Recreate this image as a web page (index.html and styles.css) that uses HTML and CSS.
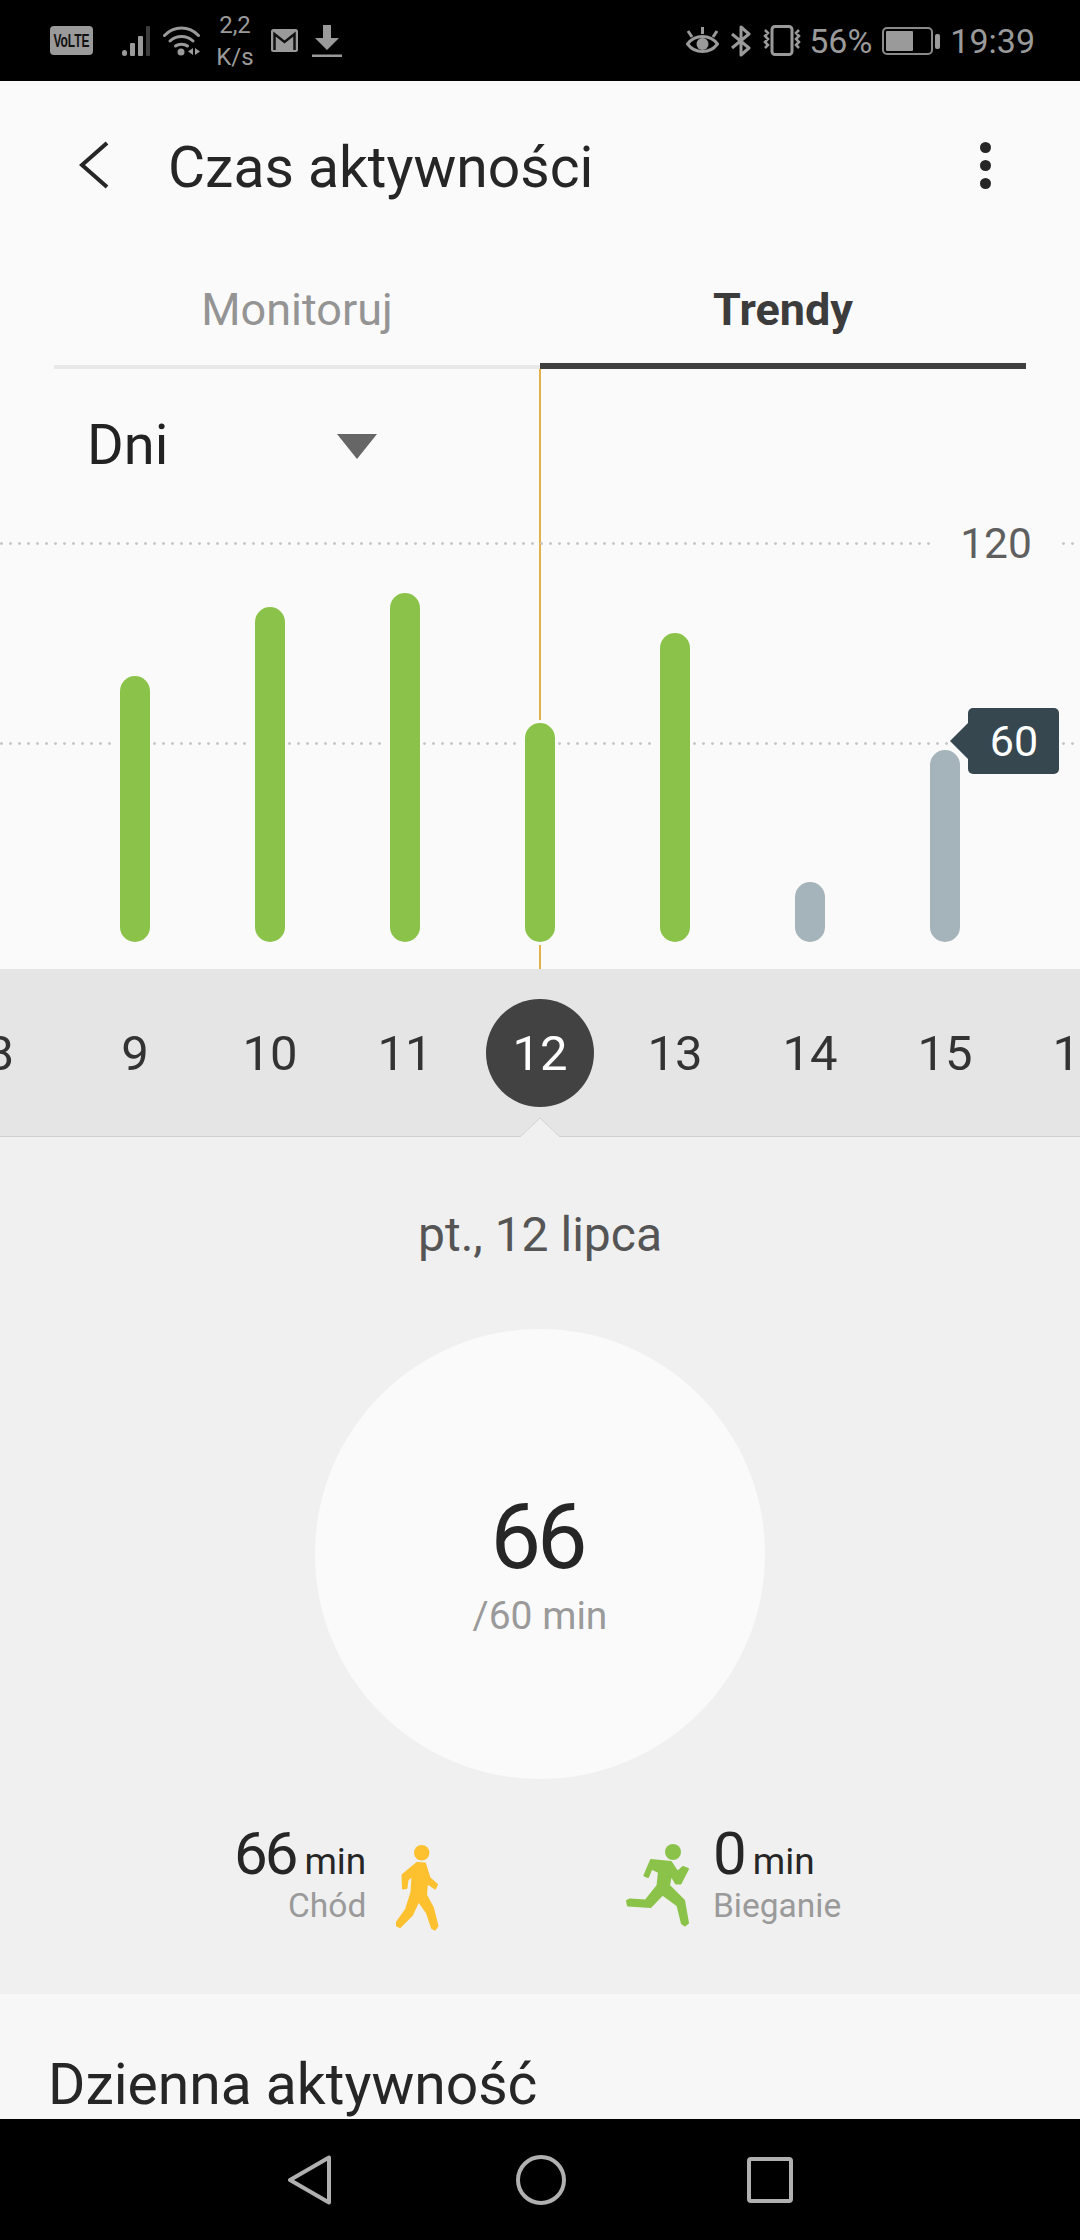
FILE: index.html
```html
<!DOCTYPE html>
<html lang="pl">
<head>
<meta charset="utf-8">
<title>Czas aktywności</title>
<link rel="stylesheet" href="styles.css">
</head>
<body>
<div class="phone">
  <div class="status">
    <div class="status-left">
      <svg class="i-volte" width="43" height="29" viewBox="0 0 43 29"><rect width="43" height="29" rx="4" fill="#9a9a9a"/><text x="21.500" y="13.200" text-anchor="middle" class="volte-t" transform="scale(1 1.600)">VoLTE</text></svg>
      <svg class="i-signal" width="32" height="30" viewBox="0 0 32 30"><rect x="0" y="24" width="5" height="6" rx="2.500" fill="#9a9a9a"/><rect x="8" y="17" width="5" height="13" rx="1" fill="#9a9a9a"/><rect x="16" y="10" width="5" height="20" rx="1" fill="#9a9a9a"/><rect x="24" y="0" width="4" height="30" rx="1" fill="#3c3c3c"/></svg>
      <svg class="i-wifi" width="37" height="30" viewBox="0 0 37 30"><g fill="none" stroke="#9a9a9a" stroke-width="3" stroke-linecap="round"><path d="M1.500 9.500C11 -0.500 26 -0.500 35.500 9.500"/><path d="M7 15C13.500 9 23.500 9 30 15"/><path d="M12.500 20C15.500 17.500 21.500 17.500 24.500 20"/></g><circle cx="18" cy="26" r="3.500" fill="#9a9a9a"/><path d="M30 22v7l-5-3.500zM32 22v7l5-3.500z" fill="#9a9a9a"/></svg>
      <div class="speed"><span>2,2</span><span>K/s</span></div>
      <svg class="i-mail" width="27" height="23" viewBox="0 0 27 23"><rect width="27" height="23" rx="2.500" fill="#9a9a9a"/><path d="M3.500 21V5L13.500 13 23.500 5V21" fill="none" stroke="#111" stroke-width="2.500"/></svg>
      <svg class="i-down" width="30" height="32" viewBox="0 0 30 32"><path d="M11 0h8v13h8L15 25 3 13h8z" fill="#9a9a9a"/><rect y="29.500" width="30" height="2.500" fill="#9a9a9a"/></svg>
    </div>
    <div class="status-right">
      <svg class="i-eye" width="33" height="29" viewBox="0 0 33 29"><path d="M1.500 18C9 8 24 8 31.500 18 24 28 9 28 1.500 18z" fill="none" stroke="#9a9a9a" stroke-width="3"/><circle cx="16.500" cy="18" r="6" fill="#9a9a9a"/><path d="M16.500 1v7M2 5l4 6M31 5l-4 6" stroke="#9a9a9a" stroke-width="3" fill="none"/></svg>
      <svg class="i-bt" width="20" height="32" viewBox="0 0 20 32"><path d="M1 9L18 23 10 30V2L18 9 1 23" fill="none" stroke="#9a9a9a" stroke-width="3" stroke-linejoin="round"/></svg>
      <svg class="i-vib" width="40" height="31" viewBox="0 0 40 31"><rect x="10" y="1.500" width="20" height="28" rx="3" fill="none" stroke="#9a9a9a" stroke-width="3"/><path d="M3 5l3 3-3 3 3 3-3 3 3 3-3 3M37 5l-3 3 3 3-3 3 3 3-3 3 3 3" fill="none" stroke="#9a9a9a" stroke-width="2.500"/></svg>
      <span class="pct">56%</span>
      <svg class="i-bat" width="58" height="28" viewBox="0 0 58 28"><rect x="1" y="1" width="49" height="26" rx="4" fill="none" stroke="#8a8a8a" stroke-width="2"/><rect x="4" y="4" width="27" height="20" rx="1" fill="#9a9a9a"/><rect x="53" y="7" width="5" height="15" rx="2" fill="#9a9a9a"/></svg>
      <span class="clock">19:39</span>
    </div>
  </div>

  <div class="header">
    <svg class="back" width="30" height="48" viewBox="0 0 30 48"><path d="M28 2L3 24l25 22" fill="none" stroke="#262626" stroke-width="4"/></svg>
    <h1 class="title">Czas aktywności</h1>
    <div class="more"><i></i><i></i><i></i></div>
  </div>

  <div class="tabs">
    <div class="tab">Monitoruj</div>
    <div class="tab tab-on">Trendy</div>
  </div>

  <div class="chart-wrap">
    <div class="cursor"></div>
    <div class="dropdown"><span class="dd-label">Dni</span><svg class="dd-arrow" width="40" height="25" viewBox="0 0 40 25"><path d="M0 0h40L20 25z" fill="#666"/></svg></div>
    <div class="grid g120"><span class="g-label">120</span></div>
    <div class="grid g60"></div>
    <div class="bars">
      <div class="bar-col"><div class="bar" style="height:266px"></div></div>
      <div class="bar-col"><div class="bar" style="height:335px"></div></div>
      <div class="bar-col"><div class="bar" style="height:349px"></div></div>
      <div class="bar-col"><div class="bar" style="height:219px"></div></div>
      <div class="bar-col"><div class="bar" style="height:309px"></div></div>
      <div class="bar-col"><div class="bar grey" style="height:60px"></div></div>
      <div class="bar-col"><div class="bar grey" style="height:192px"></div></div>
    </div>
    <div class="tag">60</div>
  </div>

  <div class="dates">
    <span class="d">8</span><span class="d">9</span><span class="d">10</span><span class="d">11</span>
    <span class="d"><b class="d-on">12</b></span>
    <span class="d">13</span><span class="d">14</span><span class="d">15</span><span class="d">16</span>
    <svg class="notch" width="42" height="20" viewBox="0 0 42 20"><path d="M1 20L21 1l20 19" fill="#f0f0f0" stroke="#d2d2d2" stroke-width="1"/></svg>
  </div>

  <div class="detail">
    <div class="date-line">pt., 12 lipca</div>
    <div class="disc">
      <div class="big">66</div>
      <div class="goal">/60 min</div>
    </div>
    <div class="stats">
      <div class="stat stat-walk">
        <div class="stat-text right">
          <div class="stat-val"><span class="num">66</span> <span class="unit">min</span></div>
          <div class="stat-name">Chód</div>
        </div>
        <svg class="walker" width="60" height="100" viewBox="15 20 60 100"><circle cx="51.700" cy="32.700" r="7.700" fill="#fdc02f"/><path d="M47 43L55 43.500 59.500 58 67 64.500 65 68.500 57 63 56 75 63 88 67.500 106 65 109.500 62 108 57 93 48.500 81 42 95 30 107 27 105.500 27 102 36 89.500 41.500 72 42.500 55 37.500 60 36.500 68 33 68.500 32.500 55z" fill="#fdc02f" stroke="#fdc02f" stroke-width="2" stroke-linejoin="round"/></svg>
      </div>
      <div class="stat stat-run">
        <svg class="runner" width="70" height="90" viewBox="15 25 70 90"><circle cx="64" cy="35" r="8" fill="#8bc34a"/><path d="M42 43L62 45 68.500 55 74 50 79 52 71.500 66.500 67 66.500 62 58 60 68.500 75 83.500 79 106 76 108.500 73 106.500 68.500 88.500 53.500 77.500 41.500 90 19 88.500 18 84 21 82.500 36.500 83.500 48.500 68.500 50 55 42.500 51.500 39 60 35.500 58.500z" fill="#8bc34a" stroke="#8bc34a" stroke-width="2" stroke-linejoin="round"/></svg>
        <div class="stat-text">
          <div class="stat-val"><span class="num">0</span> <span class="unit">min</span></div>
          <div class="stat-name">Bieganie</div>
        </div>
      </div>
    </div>
  </div>

  <div class="daily"><h2 class="daily-title">Dzienna aktywność</h2></div>

  <div class="nav">
    <svg width="44" height="50" viewBox="0 0 44 50"><path d="M42 2.500V47.500L3 25z" fill="none" stroke="#b0b0b0" stroke-width="4" stroke-linejoin="round"/></svg>
    <svg width="50" height="50" viewBox="0 0 50 50"><circle cx="25" cy="25" r="23" fill="none" stroke="#b0b0b0" stroke-width="4"/></svg>
    <svg class="nav-sq" width="46" height="46" viewBox="0 0 46 46"><rect x="2" y="2" width="42" height="42" rx="2" fill="none" stroke="#b0b0b0" stroke-width="4"/></svg>
  </div>
</div>
</body>
</html>
```

FILE: styles.css
```css
* { box-sizing: border-box; margin: 0; padding: 0; }
html, body { background: #000; }
body { font-family: Roboto, "Liberation Sans", sans-serif; }
.phone { width: 1080px; height: 2240px; overflow: hidden; display: flex; flex-direction: column; background: #fafafa; }

/* status bar */
.status { height: 81px; flex: none; background: #000; color: #9a9a9a; display: flex; justify-content: space-between; align-items: center; padding: 0 45px 0 50px; }
.status-left, .status-right { display: flex; align-items: center; }
.volte-t { font: 700 12px "Liberation Sans", sans-serif; fill: #111; }
.i-signal { margin-left: 29px; }
.i-wifi { margin-left: 9px; }
.speed { width: 50px; margin-left: 10px; display: flex; flex-direction: column; align-items: center; font-size: 24px; line-height: 32px; }
.i-mail { margin-left: 11px; }
.i-down { margin-left: 14px; }
.i-bt { margin-left: 12px; }
.i-vib { margin-left: 11px; }
.pct { font-size: 34px; margin-left: 7px; }
.i-bat { margin-left: 10px; }
.clock { font-size: 34px; margin-left: 10px; }

/* header */
.header { height: 168px; flex: none; display: flex; align-items: center; padding: 0 0 0 79px; }
.back { flex: none; }
.title { font-size: 57px; font-weight: 400; color: #262626; margin: 4px 0 0 59px; flex: 1; }
.more { width: 11px; margin-right: 89px; display: flex; flex-direction: column; gap: 7px; }
.more i { width: 11px; height: 11px; border-radius: 50%; background: #262626; }

/* tabs */
.tabs { height: 120px; flex: none; margin: 0 54px; display: flex; }
.tab { flex: 1; text-align: center; font-size: 45px; line-height: 46px; padding-top: 38px; color: #949494; border-bottom: 4px solid #e8e8e8; height: 120px; }
.tab-on { color: #3c3c3c; font-weight: 700; border-bottom: 6px solid #3e3e3e; }

/* chart */
.chart-wrap { height: 600px; flex: none; position: relative; display: flex; flex-direction: column; }
.cursor { position: absolute; left: 539px; top: 0; bottom: 0; width: 2px; background: #e3b04b; }
.dropdown { height: 152px; display: flex; align-items: center; padding-left: 87px; position: relative; }
.dd-label { font-size: 56px; color: #222; width: 250px; }
.dd-arrow { margin-top: 2px; }
.grid { position: absolute; left: 0; right: 0; height: 3px; background-image: radial-gradient(circle at 1.500px 1.500px, #c8c8c8 1.300px, transparent 1.500px); background-size: 9px 3px; background-repeat: repeat-x; }
.g120 { top: 173px; }
.g60 { top: 373px; }
.g-label { position: absolute; left: 930px; top: -23px; width: 126px; height: 50px; background: #fafafa; text-align: center; font-size: 42.500px; line-height: 50px; color: #5f5f5f; padding-left: 6px; }
.bars { position: absolute; left: 67px; top: 0; height: 573px; display: flex; align-items: flex-end; }
.bar-col { width: 135px; display: flex; justify-content: center; }
.bar { width: 30px; border-radius: 15px; background: #8bc34a; box-shadow: 0 0 0 3px #fafafa; }
.grey { background: #a5b3ba; }
.tag { position: absolute; left: 968px; top: 339px; width: 91px; height: 66px; border-radius: 5px; background: #37474f; color: #fff; font-size: 43px; line-height: 66px; text-align: center; padding-left: 1px; }
.tag::before { content: ""; position: absolute; left: -18px; top: 15px; width: 0; height: 0; border-style: solid; border-width: 18px 18px 18px 0; border-color: transparent #37474f transparent transparent; }

/* date strip */
.dates { height: 168px; flex: none; background: #e5e5e5; display: flex; justify-content: center; align-items: flex-start; position: relative; overflow: hidden; }
.dates::after { content: ""; position: absolute; left: 0; right: 0; bottom: 0; height: 1px; background: #cfcfcf; }
.d { flex: none; width: 135px; height: 108px; margin-top: 30px; display: flex; align-items: center; justify-content: center; font-size: 49px; color: #333; }
.d-on { width: 108px; height: 108px; border-radius: 50%; background: #424242; color: #fff; font-weight: 400; display: flex; align-items: center; justify-content: center; }
.notch { position: absolute; left: 519px; bottom: 0; z-index: 1; }

/* detail */
.detail { height: 857px; flex: none; background: #f0f0f0; display: flex; flex-direction: column; align-items: center; }
.date-line { margin-top: 72px; font-size: 48px; line-height: 52px; color: #555; }
.disc { margin-top: 68px; width: 450px; height: 450px; border-radius: 50%; background: #fafafa; display: flex; flex-direction: column; align-items: center; padding-top: 164px; }
.big { font-size: 90px; line-height: 90px; color: #262626; letter-spacing: -4px; padding-right: 6px; }
.goal { font-size: 39px; line-height: 44px; color: #9a9a9a; margin-top: 11px; }
.stats { margin-top: 58px; width: 100%; height: 110px; display: flex; }
.stat { display: flex; align-items: flex-start; }
.stat-walk { width: 450px; padding-left: 234px; }
.stat-run { margin-left: 174px; }
.stat-text { display: flex; flex-direction: column; }
.right { align-items: flex-end; }
.stat-val { color: #262626; line-height: 34px; white-space: nowrap; }
.num { font-size: 60px; letter-spacing: -3px; }
.unit { font-size: 37px; margin-left: 5px; }
.stat-name { font-size: 33.500px; line-height: 40px; color: #9a9a9a; }
.walker { margin-left: 19px; margin-top: 3px; flex: none; }
.runner { margin-right: 19px; margin-top: 5px; flex: none; }

/* daily */
.daily { height: 125px; flex: none; background: #f7f7f7; padding: 60px 0 0 48px; overflow: hidden; }
.daily-title { font-size: 57px; line-height: 62px; font-weight: 400; color: #262626; white-space: nowrap; }

/* nav */
.nav { height: 122px; flex: none; background: #000; display: flex; align-items: center; padding-left: 287px; gap: 185px; }
.nav-sq { margin-left: -4px; }
```
